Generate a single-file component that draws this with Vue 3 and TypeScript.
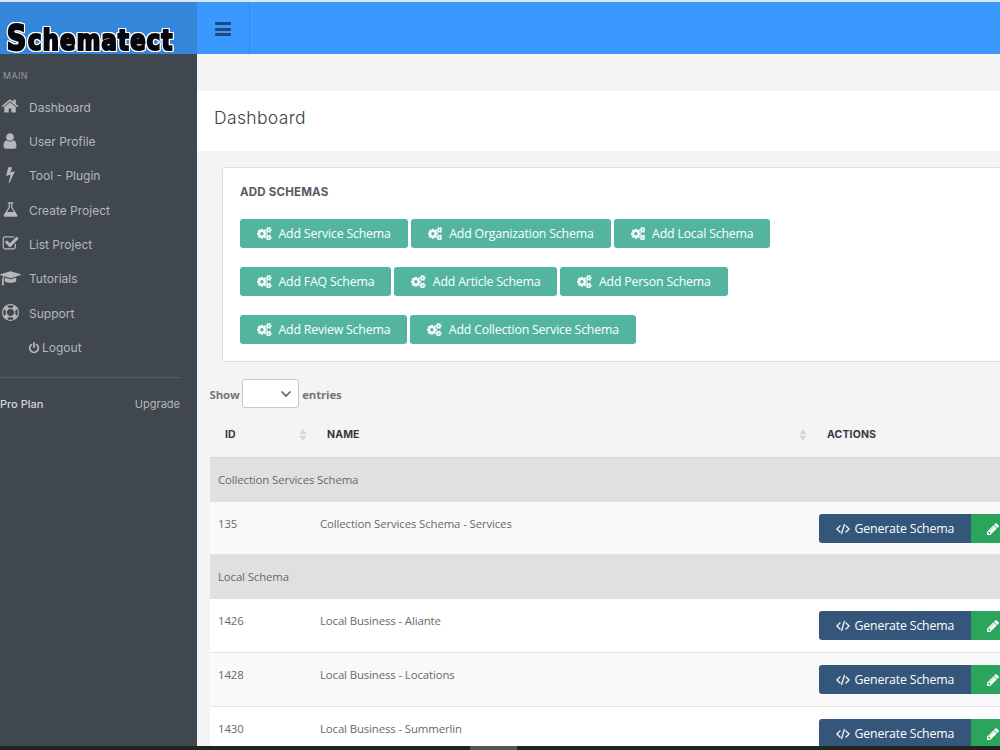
<script setup lang="ts">
interface Glyph { w: number; d: string }

const glyphs: Record<string, Glyph> = {
  home: { w: 1792, d: 'M1472 992v480q0 26-19 45t-45 19h-384v-384h-256v384h-384q-26 0-45-19t-19-45v-480q0-1 .5-3t.5-3l575-474 575 474q1 2 1 6zm223-69l-62 74q-8 9-21 11h-3q-13 0-21-7l-692-577-692 577q-12 8-24 7-13-2-21-11l-62-74q-8-10-7-23.5t11-21.5l719-599q32-26 76-26t76 26l244 204v-195q0-14 9-23t23-9h192q14 0 23 9t9 23v408l219 182q10 8 11 21.5t-7 23.5z' },
  user: { w: 1792, d: 'M1536 1399q0 109-62.5 187t-150.5 78h-854q-88 0-150.5-78t-62.5-187q0-85 8.500-160.500t31.500-152 58.500-131 94-89 134.500-34.500q131 128 313 128t313-128q76 0 134.500 34.500t94 89 58.500 131 31.500 152 8.500 160.500zm-256-887q0 159-112.500 271.500t-271.500 112.500-271.500-112.500-112.500-271.500 112.500-271.500 271.500-112.500 271.500 112.500 112.500 271.500z' },
  bolt: { w: 1792, d: 'M1333 566q18 20 7 44l-540 1157q-13 25-42 25-4 0-14-2-17-5-25.500-19t-4.500-30l197-808-406 101q-4 1-12 1-18 0-31-11-18-15-13-39l201-825q4-14 16-23t28-9h328q19 0 32 12.500t13 29.500q0 8-5 18l-171 463 396-98q8-2 12-2 19 0 34 15z' },
  flask: { w: 1792, d: 'M1591 1448q56 89 21.500 152.500t-140.500 63.500h-1152q-106 0-140.500-63.500t21.500-152.500l503-793v-399h-64q-26 0-45-19t-19-45 19-45 45-19h512q26 0 45 19t19 45-19 45-45 19h-64v399zm-779-725l-272 429h712l-272-429-20-31v-436h-128v436z' },
  check: { w: 1792, d: 'M1472 930v318q0 119-84.500 203.500t-203.500 84.500h-832q-119 0-203.500-84.500t-84.500-203.500v-832q0-119 84.500-203.500t203.500-84.500h832q63 0 117 25 15 7 18 23 3 17-9 29l-49 49q-10 10-23 10-3 0-9-2-23-6-45-6h-832q-66 0-113 47t-47 113v832q0 66 47 113t113 47h832q66 0 113-47t47-113v-254q0-13 9-22l64-64q10-10 23-10 6 0 12 3 20 8 20 29zm231-489l-814 814q-24 24-57 24t-57-24l-430-430q-24-24-24-57t24-57l110-110q24-24 57-24t57 24l263 263 647-647q24-24 57-24t57 24l110 110q24 24 24 57t-24 57z' },
  cap: { w: 2304, d: 'M1774 836l18 316q4 69-82 128t-235 93.500-323 34.500-323-34.500-235-93.500-82-128l18-316 574 181q22 7 48 7t48-7zm530-324q0 23-22 31l-1120 352q-4 1-10 1t-10-1l-652-206q-43 34-71 111.500t-34 178.500q63 36 63 109 0 69-58 107l58 433q2 14-8 25-9 11-24 11h-192q-15 0-24-11-10-11-8-25l58-433q-58-38-58-107 0-73 65-111 11-207 98-330l-333-104q-22-8-22-31t22-31l1120-352q4-1 10-1t10 1l1120 352q22 8 22 31z' },
  ring: { w: 1792, d: 'M896 0a896 896 0 1 0 .1 0zM896 128q190 0 361 90l-194 194q-82-28-167-28t-167 28l-194-194q171-90 361-90zM218 1257q-90-171-90-361t90-361l194 194q-28 82-28 167t28 167zM896 1664q-190 0-361-90l194-194q82 28 167 28t167-28l194 194q-171 90-361 90zM896 1280a384 384 0 1 1 .1 0zM1380 1063q28-82 28-167t-28-167l194-194q90 171 90 361t-90 361z' },
  power: { w: 1792, d: 'M1664 896q0 156-61 298t-164 245-245 164-298 61-298-61-245-164-164-245-61-298q0-182 80.500-343t226.500-270q43-32 95.500-25t83.500 50q32 42 24.500 94.500t-49.500 84.500q-98 74-151.500 181t-53.500 228q0 104 40.500 198.500t109.500 163.500 163.500 109.500 198.500 40.500 198.500-40.500 163.500-109.500 109.500-163.500 40.500-198.500q0-121-53.500-228t-151.500-181q-42-32-49.500-84.500t24.500-94.500q31-43 84-50t95 25q146 109 226.500 270t80.500 343zm-640-768v640q0 52-38 90t-90 38-90-38-38-90v-640q0-52 38-90t90-38 90 38 38 90z' },
  code: { w: 1920, d: 'M617 1399l-50 50q-10 10-23 10t-23-10l-466-466q-10-10-10-23t10-23l466-466q10-10 23-10t23 10l50 50q10 10 10 23t-10 23l-393 393 393 393q10 10 10 23t-10 23zm591-1067l-373 1291q-4 13-15.500 19.500t-23.500 2.500l-62-17q-13-4-19.500-15.500t-2.500-24.500l373-1291q4-13 15.500-19.500t23.500-2.500l62 17q13 4 19.500 15.500t2.500 24.500zm657 651l-466 466q-10 10-23 10t-23-10l-50-50q-10-10-10-23t10-23l393-393-393-393q-10-10-10-23t10-23l50-50q10-10 23-10t23 10l466 466q10 10 10 23t-10 23z' },
  pencil: { w: 1792, d: 'M491 1536l91-91-235-235-91 91v107h128v128h107zm523-928q0-22-22-22-10 0-17 7l-542 542q-7 7-7 17 0 22 22 22 10 0 17-7l542-542q7-7 7-17zm-54-192l416 416-832 832h-416v-416zm683 96q0 53-37 90l-166 166-416-416 166-165q36-38 90-38 53 0 91 38l235 234q37 39 37 91z' },
  cogs: { w: 1920, d: 'M896 896q0-106-75-181t-181-75-181 75-75 181 75 181 181 75 181-75 75-181zm768 512q0-52-38-90t-90-38-90 38-38 90q0 53 37.500 90.500t90.500 37.500 90.500-37.500 37.500-90.500zm0-1024q0-52-38-90t-90-38-90 38-38 90q0 53 37.500 90.500t90.500 37.500 90.500-37.500 37.500-90.500zm-384 421v185q0 10-7 19.500t-16 10.500l-155 24q-11 35-32 76 34 48 90 115 7 11 7 20 0 12-7 19-23 30-82.500 89.500t-78.500 59.500q-11 0-21-7l-115-90q-37 19-77 31-11 108-23 155-7 24-30 24h-186q-11 0-20-7.500t-10-17.500l-23-153q-34-10-75-31l-118 89q-7 7-20 7-11 0-21-8-144-133-144-160 0-9 7-19 10-14 41-53t47-61q-23-44-35-82l-152-24q-10-1-17-9.500t-7-19.500v-185q0-10 7-19.500t16-10.500l155-24q11-35 32-76-34-48-90-115-7-11-7-20 0-12 7-20 22-30 82-89t79-59q11 0 21 7l115 90q34-18 77-32 11-108 23-154 7-24 30-24h186q11 0 20 7.500t10 17.500l23 153q34 10 75 31l118-89q8-7 20-7 11 0 21 8 144 133 144 160 0 8-7 19-12 16-42 54t-45 60q23 48 34 82l152 23q10 2 17 10.500t7 19.500zm640 533v140q0 16-149 31-12 27-30 52 51 113 51 138 0 4-4 7-122 71-124 71-8 0-46-47t-52-68q-20 2-30 2t-30-2q-14 21-52 68t-46 47q-2 0-124-71-4-3-4-7 0-25 51-138-18-25-30-52-149-15-149-31v-140q0-16 149-31 13-29 30-52-51-113-51-138 0-4 4-7 4-2 35-20t59-34 30-16q8 0 46 46.500t52 67.500q20-2 30-2t30 2q51-71 92-112l6-2q4 0 124 70 4 3 4 7 0 25-51 138 17 23 30 52 149 15 149 31zm0-1024v140q0 16-149 31-12 27-30 52 51 113 51 138 0 4-4 7-122 71-124 71-8 0-46-47t-52-68q-20 2-30 2t-30-2q-14 21-52 68t-46 47q-2 0-124-71-4-3-4-7 0-25 51-138-18-25-30-52-149-15-149-31v-140q0-16 149-31 13-29 30-52-51-113-51-138 0-4 4-7 4-2 35-20t59-34 30-16q8 0 46 46.500t52 67.500q20-2 30-2t30 2q51-71 92-112l6-2q4 0 124 70 4 3 4 7 0 25-51 138 17 23 30 52 149 15 149 31z' },
}

const box = (name: string): string => `0 0 ${glyphs[name].w} 1792`

const menu: { icon: string; label: string }[] = [
  { icon: 'home', label: 'Dashboard' },
  { icon: 'user', label: 'User Profile' },
  { icon: 'bolt', label: 'Tool - Plugin' },
  { icon: 'flask', label: 'Create Project' },
  { icon: 'check', label: 'List Project' },
  { icon: 'cap', label: 'Tutorials' },
  { icon: 'ring', label: 'Support' },
]

const schemaButtons: string[][] = [
  ['Add Service Schema', 'Add Organization Schema', 'Add Local Schema'],
  ['Add FAQ Schema', 'Add Article Schema', 'Add Person Schema'],
  ['Add Review Schema', 'Add Collection Service Schema'],
]

interface Row { id?: string; name: string; shaded?: boolean }
const rows: Row[] = [
  { name: 'Collection Services Schema' },
  { id: '135', name: 'Collection Services Schema - Services', shaded: true },
  { name: 'Local Schema' },
  { id: '1426', name: 'Local Business - Aliante' },
  { id: '1428', name: 'Local Business - Locations', shaded: true },
  { id: '1430', name: 'Local Business - Summerlin' },
]
</script>

<template>
  <div class="page">
    <header class="topbar">
      <div class="brand">
        <svg class="logo" width="197" height="52" viewBox="0 2 197 52">
          <g class="logo-text">
            <text transform="translate(6.800 50) scale(.84 1)" font-size="36">S</text>
            <text transform="translate(28 49.500) scale(.88 1)" font-size="28.500" textLength="164" lengthAdjust="spacing">chematect</text>
          </g>
        </svg>
      </div>
      <div class="toggle"><i></i><i></i><i></i></div>
    </header>

    <div class="body">
      <aside class="sidebar">
        <div class="section">MAIN</div>
        <nav>
          <a v-for="m in menu" :key="m.label" class="item">
            <span class="ico"><svg :viewBox="box(m.icon)" :class="'g-' + m.icon"><path fill-rule="evenodd" :d="glyphs[m.icon].d" /></svg></span>
            <span>{{ m.label }}</span>
          </a>
          <a class="item logout">
            <svg viewBox="0 0 1792 1792"><path :d="glyphs.power.d" /></svg>
            <span>Logout</span>
          </a>
        </nav>
        <div class="plan"><b>Pro Plan</b><span>Upgrade</span></div>
      </aside>

      <main class="main">
        <div class="heading"><h1>Dashboard</h1></div>

        <section class="panel">
          <h2>ADD SCHEMAS</h2>
          <div v-for="(line, i) in schemaButtons" :key="i" class="line">
            <button v-for="b in line" :key="b" class="add">
              <svg viewBox="0 0 1920 1792"><path fill-rule="evenodd" :d="glyphs.cogs.d" /></svg>
              <span>{{ b }}</span>
            </button>
          </div>
        </section>

        <section class="list">
          <div class="length">
            <b>Show</b>
            <span class="select"><svg width="12" height="8" viewBox="0 0 12 8"><path d="M1.500 1.500 6 6l4.500-4.500" /></svg></span>
            <b>entries</b>
          </div>
          <div class="thead">
            <div class="th">ID<svg class="sort" viewBox="0 0 8 12"><path d="M4 0l3.500 5.300h-7zM4 12l3.500-5.300h-7z" /></svg></div>
            <div class="th">NAME<svg class="sort" viewBox="0 0 8 12"><path d="M4 0l3.500 5.300h-7zM4 12l3.500-5.300h-7z" /></svg></div>
            <div class="th">ACTIONS</div>
          </div>
          <template v-for="r in rows" :key="r.name">
            <div v-if="!r.id" class="group">{{ r.name }}</div>
            <div v-else class="row" :class="{ shaded: r.shaded }">
              <div class="cell">{{ r.id }}</div>
              <div class="cell">{{ r.name }}</div>
              <div class="actions">
                <button class="gen">
                  <svg viewBox="0 0 1920 1792"><path :d="glyphs.code.d" /></svg>
                  <span>Generate Schema</span>
                </button>
                <button class="edit"><svg viewBox="0 0 1792 1792"><path fill-rule="evenodd" :d="glyphs.pencil.d" /></svg></button>
              </div>
            </div>
          </template>
        </section>
      </main>
    </div>
    <footer class="taskbar"><i></i></footer>
  </div>
</template>

<style>
body { margin: 0; overflow: hidden; }
</style>

<style scoped>
.page { width: 1000px; height: 750px; overflow: hidden; display: flex; flex-direction: column; background: #f4f4f4; font-family: "Open Sans", "Liberation Sans", sans-serif; color: #67696c; }
svg { fill: currentColor; display: block; flex: none; }
button { border: 0; margin: 0; font: inherit; color: #fff; display: flex; align-items: center; white-space: nowrap; }
.topbar { height: 52px; flex: none; border-top: 2px solid #d9e9f5; background: #3a99fe; display: flex; }
.brand { width: 197px; background: #3486da; }
.logo { overflow: visible; filter: drop-shadow(1px 0 0 #fff) drop-shadow(-1px 0 0 #fff) drop-shadow(0 1px 0 #fff) drop-shadow(0 -1px 0 #fff); }
.logo-text { font-family: "DejaVu Sans Condensed", "DejaVu Sans", sans-serif; font-weight: 700; fill: #05070d; stroke: #05070d; stroke-width: 2.200px; }
.toggle { width: 52px; border-right: 1px solid #3488e2; display: flex; flex-direction: column; align-items: center; padding-top: 20px; gap: 2.500px; }
.toggle i { width: 16px; height: 3px; border-radius: 1px; background: #1f4a7b; }
.body { flex: 1; min-height: 0; display: flex; }
.sidebar { width: 197px; flex: none; background: #40474e; color: #b4b8bb; font-family: Inter, sans-serif; font-size: 12px; }
.section { font-size: 8.800px; letter-spacing: .45px; color: #979b9f; padding: 16px 0 0 3px; height: 20px; line-height: 12px; }
.item { display: flex; align-items: center; height: 34.350px; }
.ico { width: 29px; flex: none; display: flex; }
.ico svg { width: 17px; height: 17px; margin-left: 2px; margin-top: -2px; }
.ico svg.g-home, .ico svg.g-user { width: 18px; height: 18px; margin-left: 1px; }
.ico svg.g-cap { width: 21px; height: 16.300px; margin-left: 0; }
.ico svg.g-ring { width: 17px; height: 17px; }
.logout { padding-left: 28px; gap: 2px; }
.logout svg { width: 12px; height: 12px; }
.plan { margin-top: 12px; width: 180px; border-top: 1px solid #555c63; padding-top: 19px; display: flex; justify-content: space-between; font-size: 11px; line-height: 14px; }
.plan b { font-weight: 500; color: #d5d7d9; }
.main { flex: 1; min-width: 0; padding-top: 37px; overflow: hidden; }
.heading { height: 60px; background: #fff; }
.heading h1 { margin: 0; padding: 15px 0 0 17px; font: 300 17.500px/24px Inter, sans-serif; letter-spacing: .35px; color: #3d4045; }
.panel { margin: 16px -4px 0 25px; height: 193px; border: 1px solid #e0e0e0; border-radius: 3px; background: #fff; padding: 0 17px; }
.panel h2 { margin: 0; padding-top: 16px; font: 700 11.500px/16px Inter, sans-serif; letter-spacing: .2px; color: #555a63; height: 35px; }
.line { display: flex; gap: 3px; margin-bottom: 19px; }
.add { height: 29px; background: #53b5a0; border-radius: 3px; padding: 0 17px; font-size: 12.300px; letter-spacing: -.17px; gap: 7px; }
.add svg { width: 14.500px; height: 13.500px; stroke: currentColor; stroke-width: 50px; }
.list { margin-left: 12.500px; }
.length { display: flex; align-items: center; height: 29px; margin-top: 17px; font-size: 11.400px; letter-spacing: -.1px; color: #74777a; gap: 3px; }
.length b { padding-top: 1px; }
.select { width: 55px; height: 27px; border: 1px solid #c8c8c8; border-radius: 3px; background: #fff; display: flex; align-items: center; justify-content: flex-end; margin-left: -.5px; }
.select svg { margin-right: 6px; fill: none; stroke: #666; stroke-width: 1.700px; }
.thead, .row { display: grid; grid-template-columns: 102px 500px 1fr; }
.thead { height: 49px; border-bottom: 1px solid #d8d8d8; font: 700 10.500px/52px Inter, sans-serif; letter-spacing: .15px; color: #35383f; }
.th { display: flex; align-items: center; justify-content: space-between; padding: 5px 5px 0 15.500px; height: 49px; box-sizing: border-box; }
.sort { width: 8px; height: 12px; color: #d6d6d6; margin-top: -1px; }
.group { height: 43.500px; line-height: 43.500px; background: #e0e0e0; padding-left: 8.500px; font-size: 11.400px; letter-spacing: -.12px; }
.row { height: 53.900px; box-sizing: border-box; background: #fff; border-bottom: 1px solid #e4e4e4; font-size: 11.400px; letter-spacing: -.12px; }
.row.shaded { background: #f9f9f9; }
.cell { padding: 14.500px 8.500px 0; line-height: 16px; }
.actions { display: flex; padding: 12.500px 0 0 7.500px; }
.gen { width: 151.500px; height: 29px; box-sizing: border-box; padding: 0 0 0 17px; border-radius: 3px 0 0 3px; background: #34567b; font-size: 12.300px; letter-spacing: -.15px; gap: 4.500px; }
.gen svg { width: 14px; height: 13px; stroke: currentColor; stroke-width: 50px; }
.edit { height: 29px; width: 46px; box-sizing: border-box; padding: 0 0 0 15px; background: #2ba45c; flex: none; }
.edit svg { width: 14px; height: 14px; }
.taskbar { height: 4px; flex: none; background: #20241f; display: flex; padding-left: 470px; }
.taskbar i { width: 47px; background: #555852; }
</style>
